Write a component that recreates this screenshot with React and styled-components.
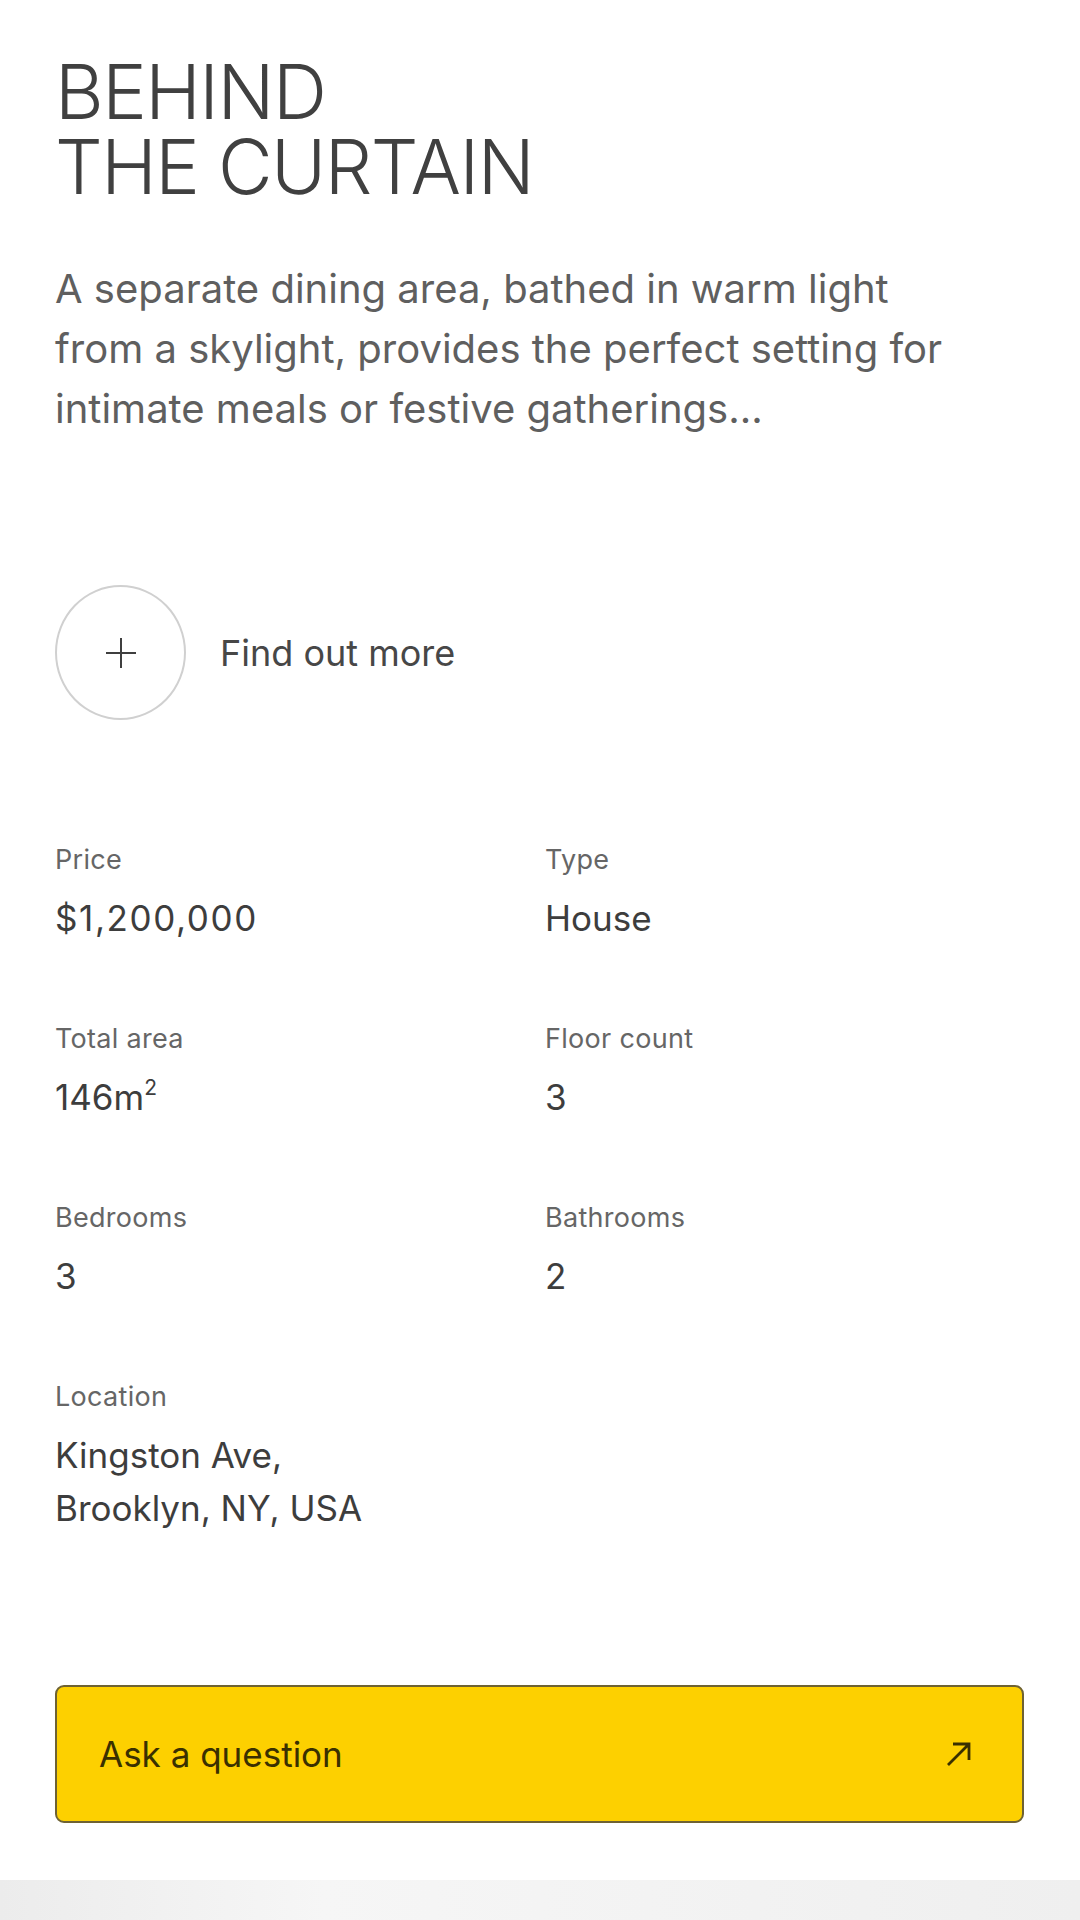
import React from 'react'
import styled, { createGlobalStyle } from 'styled-components'

const GlobalStyle = createGlobalStyle`
  html, body {
    margin: 0;
    padding: 0;
    background: #ffffff;
  }
  body {
    font-family: Inter, "Noto Sans", sans-serif;
    -webkit-font-smoothing: antialiased;
  }
`

const Page = styled.div`
  width: 1080px;
  height: 1920px;
  display: flex;
  flex-direction: column;
  overflow: hidden;
  background: #ffffff;
`

const Content = styled.main`
  flex: 1;
  display: flex;
  flex-direction: column;
  padding: 54px 56px 0 55px;
`

const Title = styled.h1`
  margin: 0;
  font-family: Inter, sans-serif;
  font-weight: 300;
  font-size: 75px;
  line-height: 75px;
  letter-spacing: -1.5px;
  color: #404040;
  text-transform: uppercase;
`

const Intro = styled.p`
  margin: 55px 0 0;
  font-family: Inter, sans-serif;
  font-size: 40px;
  line-height: 60px;
  letter-spacing: 0;
  color: #5f5f5f;
`

const MoreRow = styled.div`
  display: flex;
  align-items: center;
  gap: 34px;
  margin-top: 146px;
`

const CircleButton = styled.button`
  width: 131px;
  height: 135px;
  border-radius: 50%;
  border: 2px solid #d0d0d0;
  background: transparent;
  display: flex;
  align-items: center;
  justify-content: center;
  padding: 0;
`

const MoreText = styled.span`
  font-family: Inter, sans-serif;
  font-size: 36px;
  color: #474747;
`

const Specs = styled.dl`
  display: grid;
  grid-template-columns: 490px 1fr;
  row-gap: 78px;
  margin: 124px 0 0;
`

const Spec = styled.div`
  display: flex;
  flex-direction: column;
  gap: 16px;
  grid-column: ${p => (p.$wide ? '1 / -1' : 'auto')};
`

const Label = styled.dt`
  font-family: Inter, sans-serif;
  font-size: 27px;
  line-height: 32px;
  letter-spacing: 0.3px;
  color: #666666;
`

const Value = styled.dd`
  margin: 0;
  font-family: Inter, sans-serif;
  font-size: 35px;
  line-height: 53px;
  letter-spacing: ${p => (p.$tracked ? '1.6px' : '0')};
  color: #3d3d3d;

  sup {
    font-size: 21px;
    line-height: 0;
    vertical-align: 15px;
  }
`

const AskButton = styled.button`
  margin-top: 150px;
  height: 138px;
  width: 100%;
  display: flex;
  align-items: center;
  justify-content: space-between;
  padding: 0 48px 0 42px;
  background: #fdd000;
  border: 2px solid #6e6233;
  border-radius: 9px;
  font-family: Inter, sans-serif;
  font-size: 35px;
  color: #3a3000;
  box-sizing: border-box;
`

const Footer = styled.div`
  height: 40px;
  background: linear-gradient(90deg, #ececec 0%, #f6f6f6 30%, #f3f3f3 60%, #efefef 100%);
`

const specs = [
  { label: 'Price', value: '$1,200,000', tracked: true },
  { label: 'Type', value: 'House' },
  { label: 'Total area', value: <>146m<sup>2</sup></> },
  { label: 'Floor count', value: '3' },
  { label: 'Bedrooms', value: '3' },
  { label: 'Bathrooms', value: '2' },
  { label: 'Location', value: <>Kingston Ave,<br />Brooklyn, NY, USA</>, wide: true },
]

export default function App() {
  return (
    <Page>
      <GlobalStyle />
      <Content>
        <Title>Behind<br />the curtain</Title>
        <Intro>
          A separate dining area, bathed in warm light<br />
          from a skylight, provides the perfect setting for<br />
          intimate meals or festive gatherings...
        </Intro>
        <MoreRow>
          <CircleButton aria-label="Find out more">
            <svg width="34" height="34" viewBox="0 0 34 34" fill="none" stroke="#3f3f3f" strokeWidth="2">
              <path d="M17 2v30M2 17h30" />
            </svg>
          </CircleButton>
          <MoreText>Find out more</MoreText>
        </MoreRow>
        <Specs>
          {specs.map(s => (
            <Spec key={s.label} $wide={s.wide}>
              <Label>{s.label}</Label>
              <Value $tracked={s.tracked}>{s.value}</Value>
            </Spec>
          ))}
        </Specs>
        <AskButton>
          Ask a question
          <svg width="30" height="30" viewBox="0 0 30 30" fill="none" stroke="#3a3000" strokeWidth="2.8">
            <path d="M4 26L25 5M9 5h16v16" />
          </svg>
        </AskButton>
      </Content>
      <Footer />
    </Page>
  )
}
